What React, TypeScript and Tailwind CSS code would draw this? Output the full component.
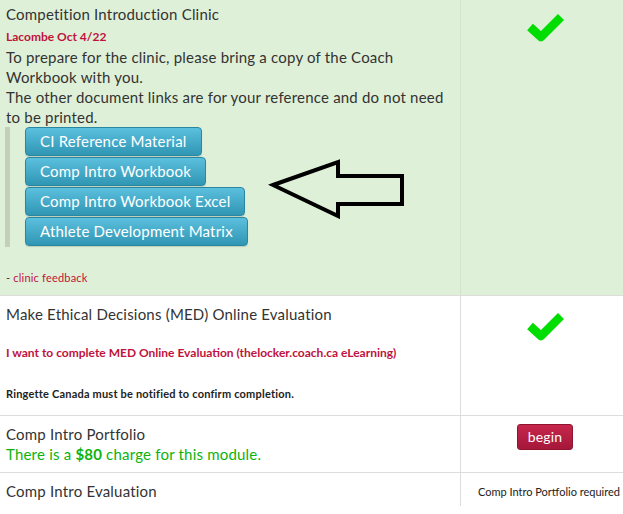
const font = { fontFamily: 'Lato, "Liberation Sans", sans-serif' };

function Check() {
  return (
    <div className="flex justify-center pl-[8px]">
      <svg width="42" height="32" viewBox="0 0 42 32" className="block">
        <polyline
          points="5,15 16,25 36,5"
          fill="none"
          stroke="#00dd00"
          strokeWidth="8.5"
          strokeLinejoin="round"
          strokeLinecap="butt"
        />
      </svg>
    </div>
  );
}

function InfoButton({ label }: { label: string }) {
  return (
    <div className="flex">
      <button className="h-[29px] mb-px px-[14px] rounded-[4px] border border-[#2a87a3] bg-gradient-to-b from-[#5bc0de] to-[#2f96b4] text-white text-[15px] leading-none tracking-[0.2px] shadow-[0_1px_1px_rgba(0,0,0,0.15)]">
        {label}
      </button>
    </div>
  );
}

export default function App() {
  return (
    <div className="w-[623px] h-[514px] overflow-hidden bg-white text-[#333] tracking-[0.2px]" style={font}>
      <div className="-mt-[4px] relative">
        {/* row 1 */}
        <div className="grid grid-cols-[461px_162px] bg-[#dff0d8]">
          <div className="border-r border-[#d5e3cd] pl-[6px] pt-[8px] pb-[10px]">
            <div className="text-[15px] leading-[20px]">Competition Introduction Clinic</div>
            <div className="text-[12px] font-bold text-[#c0123c] leading-[16px] mt-[5px] tracking-normal">Lacombe Oct 4/22</div>
            <div className="text-[15px] leading-[20px] mt-[2px]">
              To prepare for the clinic, please bring a copy of the Coach
              <br />
              Workbook with you.
              <br />
              The other document links are for your reference and do not need
              <br />
              to be printed.
            </div>
            <div className="border-l-[5px] border-[#c3cfb9] ml-[-1px] pl-[15px]">
              <InfoButton label="CI Reference Material" />
              <InfoButton label="Comp Intro Workbook" />
              <InfoButton label="Comp Intro Workbook Excel" />
              <InfoButton label="Athlete Development Matrix" />
            </div>
            <div className="text-[11px] leading-[14px] mt-[24px]">
              - <span className="text-[#c0123c]">clinic feedback</span>
            </div>
          </div>
          <div className="pt-[16px]">
            <Check />
          </div>
        </div>

        {/* row 2 */}
        <div className="grid grid-cols-[461px_162px] border-t border-[#ddd]">
          <div className="border-r border-[#ddd] pl-[6px] pt-[8px] pb-[14px]">
            <div className="text-[15px] leading-[20px]">Make Ethical Decisions (MED) Online Evaluation</div>
            <div className="text-[12px] font-bold text-[#c0123c] leading-[16px] mt-[21px] tracking-normal">
              I want to complete MED Online Evaluation (thelocker.coach.ca eLearning)
            </div>
            <div className="text-[11px] font-bold text-[#222] leading-[14px] mt-[26px]">
              Ringette Canada must be notified to confirm completion.
            </div>
          </div>
          <div className="pt-[15px]">
            <Check />
          </div>
        </div>

        {/* row 3 */}
        <div className="grid grid-cols-[461px_162px] border-t border-[#ddd]">
          <div className="border-r border-[#ddd] pl-[6px] pt-[8px] pb-[8px]">
            <div className="text-[15px] leading-[20px]">Comp Intro Portfolio</div>
            <div className="text-[15px] leading-[20px] text-[#0db30d]">
              There is a <span className="font-bold">$80</span> charge for this module.
            </div>
          </div>
          <div className="flex justify-center pt-[8px] pl-[6px]">
            <button className="h-[26px] px-[10px] rounded-[3px] border border-[#8f1430] bg-gradient-to-b from-[#c7264c] to-[#a5173a] text-white text-[14px] leading-none">
              begin
            </button>
          </div>
        </div>

        {/* row 4 */}
        <div className="grid grid-cols-[461px_162px] border-t border-[#ddd]">
          <div className="border-r border-[#ddd] pl-[6px] pt-[8px] pb-[5px]">
            <div className="text-[15px] leading-[20px]">Comp Intro Evaluation</div>
          </div>
          <div className="pt-[12px] text-right pr-[3px] text-[11px] leading-[14px] text-[#222] whitespace-nowrap tracking-normal">
            Comp Intro Portfolio required
          </div>
        </div>

        {/* pointer arrow */}
        <svg className="absolute left-[268px] top-[161px]" width="140" height="62" viewBox="0 0 140 62">
          <polygon
            points="5,28 70,5 70,19 134,19 134,47 70,47 70,59"
            fill="none"
            stroke="#000"
            strokeWidth="4"
            strokeLinejoin="miter"
          />
        </svg>
      </div>
    </div>
  );
}
